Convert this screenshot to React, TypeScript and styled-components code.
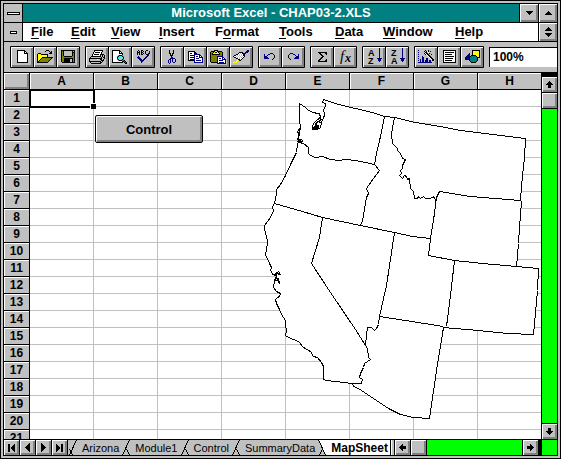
import React from "react";
import styled, { createGlobalStyle, css } from "styled-components";

const GlobalStyle = createGlobalStyle`
  * { box-sizing: border-box; }
  body { margin: 0; background: #c0c0c0; }
  button, input { font: inherit; color: inherit; border: 0; border-radius: 0; padding: 0; margin: 0; }
  svg { display: block; flex: none; }
`;

const SANS = '"Liberation Sans", Arial, sans-serif';

const bevel = css`
  background: #c0c0c0;
  box-shadow: inset 1px 1px #fff, inset -1px -1px #808080, inset -2px -2px #808080;
`;

const tick = "linear-gradient(#000, #000)";

const Frame = styled.div`
  display: flex;
  height: 100vh;
  padding: 2px;
  border: 1px solid #000;
  font-family: ${SANS};
  color: #000;
  background:
    ${tick} 21px 0 / 1px 100% no-repeat,
    ${tick} right 21px top 0 / 1px 100% no-repeat,
    ${tick} 0 21px / 100% 1px no-repeat,
    ${tick} 0 bottom 21px / 100% 1px no-repeat,
    #c0c0c0;
`;

const AppWindow = styled.div`
  flex: 1;
  min-width: 0;
  display: flex;
  flex-direction: column;
  border: 1px solid #000;
  background: #c0c0c0;
`;

const TitleBar = styled.header`
  display: flex;
  height: 19px;
  border-bottom: 1px solid #000;
  background: #008080;
`;

const Title = styled.h1`
  flex: 1;
  margin: 0;
  text-align: center;
  font-size: 13px;
  line-height: 18px;
  color: #fff;
  white-space: nowrap;
`;

const FrameButton = styled.button<{ $side: "left" | "right"; $raised?: boolean }>`
  display: flex;
  align-items: center;
  justify-content: center;
  width: 19px;
  height: 18px;
  flex: none;
  background: #c0c0c0;
  ${(p) => p.$raised && bevel}
  ${(p) => (p.$side === "left" ? "border-right: 1px solid #000;" : "border-left: 1px solid #000;")}
`;

const MenuBar = styled.nav`
  display: flex;
  height: 19px;
  border-bottom: 1px solid #000;
  background: #fff;
`;

const MenuItems = styled.div`
  flex: 1;
  display: flex;
  padding-left: 8px;
`;

const MenuItem = styled.button<{ $w: number }>`
  width: ${(p) => p.$w}px;
  background: none;
  text-align: left;
  font-size: 13px;
  font-weight: bold;
  line-height: 16px;
  white-space: nowrap;
  u { text-underline-offset: 2px; text-decoration-thickness: 1px; text-decoration-skip-ink: none; }
`;

const Toolbar = styled.div`
  display: flex;
  align-items: center;
  gap: 5px;
  height: 31px;
  padding: 0 0 1px 6px;
  border-bottom: 1px solid #000;
  overflow: hidden;
`;

const ToolGroup = styled.div`
  display: flex;
  flex: none;
  gap: 1px;
  padding: 1px;
  height: 22px;
  background: #000;
  border-radius: 1px;
`;

const ToolButton = styled.button`
  display: flex;
  align-items: center;
  justify-content: center;
  width: 22px;
  height: 20px;
  ${bevel}
`;

const ZoomBox = styled.input`
  flex: 1;
  min-width: 0;
  height: 20px;
  padding-left: 3px;
  border-top: 1px solid #000;
  border-left: 1px solid #000;
  background: #fff;
  font-size: 12px;
  font-weight: bold;
  outline: none;
`;

const Workspace = styled.main`
  flex: 1;
  min-height: 0;
  display: flex;
`;

const SheetArea = styled.div`
  position: relative;
  flex: 1;
  min-width: 0;
  overflow: hidden;
  background: #fff;
`;

const Grid = styled.table`
  width: 100%;
  table-layout: fixed;
  border-collapse: separate;
  border-spacing: 0;
  font-size: 12px;
  line-height: 15px;
`;

const HeadCol = styled.col`
  width: 26px;
`;

const DataCol = styled.col`
  width: 64px;
`;

const HeadCell = styled.th`
  height: 17px;
  padding: 0;
  border-right: 1px solid #000;
  border-bottom: 1px solid #000;
  background: #c0c0c0;
  box-shadow: inset 1px 1px #fff;
  font-weight: bold;
  tr > &:last-child { border-right: 0; }
`;

const Corner = styled.td`
  height: 17px;
  padding: 0;
  border-right: 1px solid #000;
  border-bottom: 1px solid #000;
  ${bevel}
`;

const Cell = styled.td<{ $active?: boolean }>`
  height: 17px;
  padding: 0;
  border-right: 1px solid #c0c0c0;
  border-bottom: 1px solid #c0c0c0;
  &:last-child { border-right: 0; }
  ${(p) => p.$active && "outline: 2px solid #000; outline-offset: -1px;"}
`;

const FillHandle = styled.span`
  position: absolute;
  left: 86px;
  top: 30px;
  width: 6px;
  height: 6px;
  border: 1px solid #fff;
  border-right: 0;
  border-bottom: 0;
  background: #000;
`;

const SheetButton = styled.button`
  position: absolute;
  left: 91px;
  top: 42px;
  width: 108px;
  height: 28px;
  border: 1px solid #000;
  border-radius: 2px;
  font-size: 13px;
  font-weight: bold;
  background: #c0c0c0;
  box-shadow: inset 1px 1px #fff, inset -2px -2px #808080;
`;

const MapDrawing = styled.svg`
  position: absolute;
  left: 256px;
  top: 17px;
`;

const VScroll = styled.div`
  display: flex;
  flex-direction: column;
  width: 16px;
  border-left: 1px solid #000;
  background: #0f0;
`;

const SplitBar = styled.div`
  height: 4px;
  background: #000;
`;

const ScrollButton = styled.button<{ $edge?: "bottom" | "top" | "left" | "right" }>`
  display: flex;
  align-items: center;
  justify-content: center;
  flex: none;
  width: ${(p) => (p.$edge === "left" || p.$edge === "right" ? 16 : 15)}px;
  height: ${(p) => (p.$edge === "top" || p.$edge === "bottom" ? 16 : 15)}px;
  ${bevel}
  ${(p) => p.$edge && `border-${p.$edge}: 1px solid #000;`}
`;

const Track = styled.div`
  flex: 1;
`;

const BottomBar = styled.footer`
  display: flex;
  height: 16px;
  border-top: 1px solid #000;
`;

const Tabs = styled.div`
  display: flex;
  flex: none;
`;

const Tab = styled.button<{ $active?: boolean }>`
  height: 15px;
  padding: 0 2px;
  background: ${(p) => (p.$active ? "#fff" : "#c0c0c0")};
  font-size: ${(p) => (p.$active ? 12 : 11)}px;
  font-weight: ${(p) => (p.$active ? "bold" : "normal")};
  line-height: 14px;
  white-space: nowrap;
`;

const SplitBox = styled.div`
  width: 5px;
  border-left: 1px solid #000;
  border-right: 1px solid #000;
  background: #c0c0c0;
  box-shadow: inset 1px 0 #fff;
`;

const HScroll = styled.div`
  flex: 1;
  display: flex;
  background: #0f0;
  border-right: 4px solid #000;
`;

const GrowBox = styled.div`
  width: 15px;
  background: #0f0;
`;

const PALETTE: Record<string, string> = {
  "#": "#000000",
  w: "#ffffff",
  y: "#ffff00",
  o: "#808000",
  g: "#808080",
  l: "#c0c0c0",
  b: "#000080",
  c: "#00ffff",
  t: "#008080",
};

function Pixels({ rows, children }: { rows: string[]; children?: React.ReactNode }) {
  const width = Math.max(...rows.map((r) => r.length));
  const rects: React.ReactNode[] = [];
  rows.forEach((row, y) => {
    let x = 0;
    while (x < row.length) {
      let end = x + 1;
      while (row[end] === row[x]) end++;
      if (PALETTE[row[x]]) {
        rects.push(<rect key={`${x}-${y}`} x={x} y={y} width={end - x} height={1} fill={PALETTE[row[x]]} />);
      }
      x = end;
    }
  });
  return (
    <svg width={width} height={rows.length} shapeRendering="crispEdges" aria-hidden="true">
      {rects}
      {children}
    </svg>
  );
}

const ART = {
  newFile: [
    "########...",
    "#wwwwww##..",
    "#wwwwww#w#.",
    "#wwwwww####",
    "#wwwwwwwww#",
    "#wwwwwwwww#",
    "#wwwwwwwww#",
    "#wwwwwwwww#",
    "#wwwwwwwww#",
    "#wwwwwwwww#",
    "#wwwwwwwww#",
    "#wwwwwwwww#",
    "###########",
  ],
  open: [
    ".........###....",
    "........#...#.#.",
    ".............##.",
    ".###........###.",
    "#yyy#######.....",
    "#yyyyyyyyy#.....",
    "#yyyyyyyyy#.....",
    "#yyyy###########",
    "#yyy#ooooooooo#.",
    "#yy#ooooooooo#..",
    "#y#ooooooooo#...",
    "##ooooooooo#....",
    "###########.....",
  ],
  save: [
    "##############",
    "#o#llllllll#l#",
    "#o#llllllll###",
    "#o#llllllll#o#",
    "#o#llllllll#o#",
    "#o#llllllll#o#",
    "#oo########oo#",
    "#oooooooooooo#",
    "#oo#########o#",
    "#oo######ll#o#",
    "#oo######ll#o#",
    "#oo######ll#o#",
    ".#############",
  ],
  print: [
    ".....#########..",
    ".....#wwwwwww#..",
    "....#w#####w#...",
    "....#wwwwwww#...",
    "...#w#####w####.",
    "...#wwwwwww#l#l#",
    "..##########l#l#",
    ".#llllllllll#l##",
    "#############ll#",
    "#lllllllyyl##l#.",
    "#lllllllllll###.",
    "############l#..",
    ".#lllllllll##...",
    "..##########....",
  ],
  preview: [
    "########........",
    "#wwwwww##.......",
    "#wwwwww#w#......",
    "#wwwwww####.....",
    "#wwwwwwwww#.....",
    "#wwwwwg###g.....",
    "#wwwwg#ccl#g....",
    "#wwww#cclll#....",
    "#wwww#clllc#....",
    "#wwwwg#llc#g....",
    "#wwwwwg###gt#...",
    "#wwwwwwwww##t#..",
    "###########.#t#.",
    ".............##.",
  ],
  spell: [
    "..#..##...##...",
    ".#.#.#.#.#...b.",
    ".###.##..#...b.",
    ".#.#.#.#.#..bb.",
    ".#.#.##...##b..",
    "...........bb..",
    "..b.......bb...",
    ".bbb.....bb....",
    "..bbb...bb.....",
    "...bbb.bb......",
    "....bbbb.......",
    ".....bb........",
    ".....b.........",
  ],
  cut: [
    ".#...#...",
    ".#...#...",
    ".#...#...",
    ".##.##...",
    "..#.#....",
    "..###....",
    "...#.....",
    "...bb....",
    "..bbbbb..",
    ".bb.b..b.",
    "b.b.b..b.",
    "b.b.b..b.",
    "b.b..bb..",
    ".b.......",
  ],
  copy: [
    "#######........",
    "#wwwww##.......",
    "#w##ww###......",
    "#wwwwwbbbbbb...",
    "#w####bwwwwbb..",
    "#wwwwwbwbbwbwb.",
    "#w####bwwwwbbbb",
    "#wwwwwbwbbbwwwb",
    "#w####bwwwwwwwb",
    "######bwbbbbbwb",
    "......bwwwwwwwb",
    "......bbbbbbbbb",
  ],
  paste: [
    "....####........",
    ".####yy#####....",
    "#oo#y##y#ooo#...",
    "#o#yyyyyy#oo#...",
    "#o########oo#...",
    "#ooooooooooo#...",
    "#oooooobbbbbb...",
    "#oooooobwwwwbb..",
    "#oooooobwbbwbwb.",
    "#oooooobwwwwbbbb",
    "#oooooobwbbbbwwb",
    "#oooooobwwwwwwwb",
    ".######bwbbbbbwb",
    ".......bbbbbbbbb",
  ],
  painter: [
    "..............bb",
    ".............bbb",
    "......####..bbb.",
    ".....#wlw#bbb...",
    "...##wlwlw#b....",
    ".##wlwlwlw##....",
    "#wwlwlwlwlw#....",
    ".##wlwlwlw#.....",
    "...##wlwy#......",
    "....y##y#.......",
    "....yy##........",
    "...yy...........",
    "yyyy............",
  ],
  undo: [
    "......bbb...",
    "b...bb...b..",
    "b..b......b.",
    "bbb.......#.",
    "bbbb......#.",
    "bbbbb....#..",
    "........#...",
  ],
  redo: [
    "...bbb......",
    "..b...bb...b",
    ".b......b..b",
    ".#.......bbb",
    ".#......bbbb",
    "..#....bbbbb",
    "...#........",
  ],
  sum: [
    "#########",
    ".##....##",
    "..##....#",
    "...##....",
    "....##...",
    "...##....",
    "..##.....",
    ".##.....#",
    "##.....##",
    "#########",
  ],
  sortArrow: [
    "............b..",
    "............b..",
    "............b..",
    "............b..",
    "............b..",
    "............b..",
    "............b..",
    "............b..",
    "............b..",
    "............b..",
    "..........bbbbb",
    "...........bbb.",
    "...........bbb.",
    "............b..",
    "...............",
    "...............",
    "...............",
    "...............",
  ],
  chart: [
    "b......#..#.....",
    "......#.#w#.#...",
    "b......##.w.....",
    "......#w##.#....",
    "b......#w##..#..",
    ".........w##....",
    "b...b.....w##...",
    "....bb.....w##..",
    "b...bb..bb..w##.",
    "..b.bb..bb...w##",
    "b.b.bb.bbb.bb.##",
    "..b.bb.bbb.bb...",
    "bbbbbbbbbbbbbb..",
  ],
  textBox: [
    "#############",
    "#wwwwwwwwwww#",
    "#w#########w#",
    "#wwwwwwwwwww#",
    "#w#######www#",
    "#wwwwwwwwwww#",
    "#w#########w#",
    "#wwwwwwwwwww#",
    "#w########ww#",
    "#wwwwwwwwwww#",
    "#w#######www#",
    "#wwwwwwwwwww#",
    "#############",
  ],
  draw: [
    ".......########",
    ".......#yyyyyy#",
    ".......#yyyyyy#",
    "....b..#yyyyyy#",
    "...bb..#yyyyyy#",
    "..bbb.#####yyy#",
    ".bbbb#ttttt#yy#",
    "bbbb#ttttttt###",
    "bbbb#ttttttt#..",
    "bbbb#ttttttt#..",
    "....#ttttttt#..",
    ".....#ttttt#...",
    "......#####....",
  ],
  sysMenu: ["#############", "#wwwwwwwwwww#", "#############"],
  docMenu: ["#######", "#wwwww#", "#######"],
  smallDown: ["#######", ".#####.", "..###..", "...#..."],
  smallUp: ["...#...", "..###..", ".#####.", "#######"],
  restore: ["...#...", "..###..", ".#####.", "#######", ".......", ".......", "#######", ".#####.", "..###..", "...#..."],
  up: ["...#...", "..###..", ".#####.", "#######", "..###..", "..###..", "..###.."],
  down: ["..###..", "..###..", "..###..", "#######", ".#####.", "..###..", "...#..."],
  left: ["...#...", "..##...", ".######", "#######", ".######", "..##...", "...#..."],
  right: ["...#...", "...##..", "######.", "#######", "######.", "...##..", "...#..."],
  first: ["##....#", "##...##", "##..###", "##.####", "##.####", "##..###", "##...##", "##....#"],
  prev: ["....#", "...##", "..###", ".####", "#####", ".####", "..###", "...##", "....#"],
  next: ["#....", "##...", "###..", "####.", "#####", "####.", "###..", "##...", "#...."],
  last: ["#....##", "##...##", "###..##", "####.##", "####.##", "###..##", "##...##", "#....##"],
};

const svgLetter = { fontFamily: SANS, fontWeight: "bold", fontSize: 9 } as const;

function SortIcon({ first, second }: { first: string; second: string }) {
  return (
    <Pixels rows={ART.sortArrow}>
      <text x={1} y={8} {...svgLetter}>{first}</text>
      <text x={1} y={16} {...svgLetter}>{second}</text>
    </Pixels>
  );
}

const FunctionIcon = () => (
  <svg width="18" height="18" aria-hidden="true">
    <text x="4" y="13" fontFamily="Liberation Serif, serif" fontStyle="italic" fontSize="15">f</text>
    <text x="9" y="14" fontFamily="Liberation Serif, serif" fontStyle="italic" fontWeight="bold" fontSize="12">x</text>
  </svg>
);

const px = (rows: string[]) => <Pixels rows={rows} />;

const TOOL_GROUPS: { label: string; icon: React.ReactNode }[][] = [
  [
    { label: "New Workbook", icon: px(ART.newFile) },
    { label: "Open", icon: px(ART.open) },
    { label: "Save", icon: px(ART.save) },
  ],
  [
    { label: "Print", icon: px(ART.print) },
    { label: "Print Preview", icon: px(ART.preview) },
    { label: "Spelling", icon: px(ART.spell) },
  ],
  [
    { label: "Cut", icon: px(ART.cut) },
    { label: "Copy", icon: px(ART.copy) },
    { label: "Paste", icon: px(ART.paste) },
    { label: "Format Painter", icon: px(ART.painter) },
  ],
  [
    { label: "Undo", icon: px(ART.undo) },
    { label: "Repeat", icon: px(ART.redo) },
  ],
  [
    { label: "AutoSum", icon: px(ART.sum) },
    { label: "Function Wizard", icon: <FunctionIcon /> },
  ],
  [
    { label: "Sort Ascending", icon: <SortIcon first="A" second="Z" /> },
    { label: "Sort Descending", icon: <SortIcon first="Z" second="A" /> },
  ],
  [
    { label: "ChartWizard", icon: px(ART.chart) },
    { label: "Text Box", icon: px(ART.textBox) },
    { label: "Drawing", icon: px(ART.draw) },
  ],
];

const MENUS: [string, string, string, number][] = [
  ["", "F", "ile", 40],
  ["", "E", "dit", 40],
  ["", "V", "iew", 48],
  ["", "I", "nsert", 56],
  ["F", "o", "rmat", 64],
  ["", "T", "ools", 56],
  ["", "D", "ata", 48],
  ["", "W", "indow", 72],
  ["", "H", "elp", 48],
];

const COLUMNS = ["A", "B", "C", "D", "E", "F", "G", "H"];
const ROWS = Array.from({ length: 21 }, (_, i) => i + 1);

const OUTLINE =
  "M299 103L305 107 308 110 313 112 317 113 319 113 320 116 318 119 321 121 323 118 324 114 323 109 325 106 325 103 322 102 323 99 326 100 338 104 355 108 372 112 384 116 394 117 415 122 440 126 460 130 477 132 500 135 525 138 524 157 521 185 520 200 521 201 519 227 518 243 516 266 538 268 537 290 533 334 507 333 478 330 443 327 436 370 429 418 413 417 400 414 388 408 367 394 358 388 353 386 352 383 326 380 323 379 323 366 321 362 317 357 313 356 310 351 303 347 298 341 288 337 285 335 286 330 285 325 285 320 281 314 279 309 276 303 275 299 277 297 279 296 280 293 276 291 273 287 274 280 276 276 272 273 270 270 271 267 269 263 265 254 267 243 267 240 264 229 264 225 270 217 273 210 272 206 274 203 276 193 276 189 280 184 285 175 291 162 296 152 297 143 299 141 297 139 299 132 300 127 299 120Z";

const BORDERS = [
  "M299 142L303 143 308 147 308 153 310 155 315 157 322 156 330 159 338 160 345 159 355 160 365 162 374 164 379 170 373 178 366 188 368 193 366 197 362 220 360 225",
  "M384 116L380 136 376 153 374 164",
  "M274 203L288 207 302 211 322 217 360 225 394 232 412 236 430 238",
  "M322 217L319 237 311 263 330 292 355 329 365 345",
  "M394 117L391 133 392 143 397 148 397 150 400 153 402 158 405 159 402 165 402 168 400 170 401 173 399 175 402 178 404 175 406 176 407 179 409 178 410 188 413 191 414 198 417 198 418 196 420 198 423 196 425 198 430 198 433 196 434 198 436 201",
  "M439 191L470 196 495 198 520 200",
  "M439 191L436 197 433 220 430 238 428 255 454 260 482 263 516 266",
  "M454 260L450 295 446 326",
  "M394 232L386 285 381 307 379 316 405 320 443 326",
  "M379 316L378 324 376 328 374 330 371 327 367 327 366 335 365 345 367 348 368 357 370 359 364 363 363 367 360 373 359 377 362 379 361 383 352 383",
];

const INLETS = [
  "M319 113L320 117 316 120 314 122 312 125 312 129 316 129 318 125 315 125 317 121 321 122 320 127 317 129 312 128 316 124 314 122 318 118 322 119",
  "M313 126L317 126M312 127L318 127M313 128L317 128",
  "M300 127L297 131 299 135 297 138 301 141 297 141 301 139 303 142",
  "M298 129L300 132M298 133L298 139",
  "M276 277L275 273 278 271 280 274 276 273 276 277 279 283 278 278M272 274L277 276M274 281L277 279",
];

function WesternStates() {
  return (
    <MapDrawing width="284" height="332" viewBox="260 90 284 332" shapeRendering="crispEdges" role="img" aria-label="Map of the western states">
      <g transform="translate(0.5 0.5)" stroke="#000" strokeWidth="1" fill="none">
        <path d={OUTLINE} fill="#fff" />
        {BORDERS.map((d) => <path key={d} d={d} />)}
        {INLETS.map((d) => <path key={d} d={d} />)}
      </g>
    </MapDrawing>
  );
}

function Seam({ kind }: { kind: "start" | "middle" | "active" }) {
  return (
    <svg width="12" height="15" aria-hidden="true" shapeRendering="crispEdges">
      {kind === "active" ? (
        <>
          <path d="M2 0h10v15H9z" fill="#fff" />
          <path d="M1.500 0L8.500 15M2.500 15L5.500 9" fill="none" stroke="#000" />
        </>
      ) : (
        <path d={kind === "start" ? "M1.500 15L8.500 0M1.500 9L4.500 15" : "M1.500 15L8.500 0M5.500 9L8.500 15"} fill="none" stroke="#000" />
      )}
    </svg>
  );
}

export default function App() {
  return (
    <>
      <GlobalStyle />
      <Frame>
        <AppWindow>
          <TitleBar>
            <FrameButton $side="left" aria-label="Application menu">{px(ART.sysMenu)}</FrameButton>
            <Title>Microsoft Excel - CHAP03-2.XLS</Title>
            <FrameButton $side="right" $raised aria-label="Minimize">{px(ART.smallDown)}</FrameButton>
            <FrameButton $side="right" $raised aria-label="Maximize">{px(ART.smallUp)}</FrameButton>
          </TitleBar>

          <MenuBar>
            <FrameButton $side="left" aria-label="Document menu">{px(ART.docMenu)}</FrameButton>
            <MenuItems>
              {MENUS.map(([before, key, after, w]) => (
                <MenuItem key={before + key + after} $w={w}>{before}<u>{key}</u>{after}</MenuItem>
              ))}
            </MenuItems>
            <FrameButton $side="right" $raised aria-label="Restore document">{px(ART.restore)}</FrameButton>
          </MenuBar>

          <Toolbar role="toolbar" aria-label="Standard">
            {TOOL_GROUPS.map((group) => (
              <ToolGroup key={group[0].label}>
                {group.map((tool) => (
                  <ToolButton key={tool.label} aria-label={tool.label}>{tool.icon}</ToolButton>
                ))}
              </ToolGroup>
            ))}
            <ZoomBox aria-label="Zoom" defaultValue="100%" />
          </Toolbar>

          <Workspace>
            <SheetArea>
              <Grid>
                <colgroup>
                  <HeadCol />
                  {COLUMNS.slice(0, -1).map((c) => <DataCol key={c} />)}
                  <col />
                </colgroup>
                <thead>
                  <tr>
                    <Corner />
                    {COLUMNS.map((c) => <HeadCell key={c} scope="col">{c}</HeadCell>)}
                  </tr>
                </thead>
                <tbody>
                  {ROWS.map((r) => (
                    <tr key={r}>
                      <HeadCell scope="row">{r}</HeadCell>
                      {COLUMNS.map((c) => <Cell key={c} $active={r === 1 && c === "A"} />)}
                    </tr>
                  ))}
                </tbody>
              </Grid>
              <FillHandle />
              <WesternStates />
              <SheetButton>Control</SheetButton>
            </SheetArea>
            <VScroll>
              <SplitBar />
              <ScrollButton $edge="bottom" aria-label="Scroll up">{px(ART.up)}</ScrollButton>
              <ScrollButton $edge="bottom" aria-label="Vertical position" />
              <Track />
              <ScrollButton $edge="top" aria-label="Scroll down">{px(ART.down)}</ScrollButton>
            </VScroll>
          </Workspace>

          <BottomBar>
            <ScrollButton $edge="right" aria-label="First sheet">{px(ART.first)}</ScrollButton>
            <ScrollButton $edge="right" aria-label="Previous sheet">{px(ART.prev)}</ScrollButton>
            <ScrollButton $edge="right" aria-label="Next sheet">{px(ART.next)}</ScrollButton>
            <ScrollButton $edge="right" aria-label="Last sheet">{px(ART.last)}</ScrollButton>
            <Tabs>
              <Seam kind="start" />
              <Tab>Arizona</Tab>
              <Seam kind="middle" />
              <Tab>Module1</Tab>
              <Seam kind="middle" />
              <Tab>Control</Tab>
              <Seam kind="middle" />
              <Tab>SummaryData</Tab>
              <Seam kind="active" />
              <Tab $active>MapSheet</Tab>
            </Tabs>
            <SplitBox />
            <HScroll>
              <ScrollButton $edge="right" aria-label="Scroll left">{px(ART.left)}</ScrollButton>
              <ScrollButton $edge="right" aria-label="Horizontal position" />
              <Track />
              <ScrollButton $edge="left" aria-label="Scroll right">{px(ART.right)}</ScrollButton>
            </HScroll>
            <GrowBox />
          </BottomBar>
        </AppWindow>
      </Frame>
    </>
  );
}
